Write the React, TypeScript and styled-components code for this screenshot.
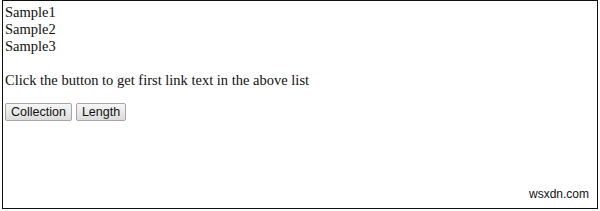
import React from 'react'
import styled, { createGlobalStyle } from 'styled-components'

const GlobalStyle = createGlobalStyle`
  html, body {
    margin: 0;
    padding: 0;
    background: #fff;
  }
`

const Page = styled.div`
  width: 600px;
  height: 211px;
  padding: 0 2px 2px 2px;
  box-sizing: border-box;
`

const Frame = styled.div`
  position: relative;
  height: 100%;
  border: 1px solid #111;
  box-sizing: border-box;
  padding: 3px 2px;
  font-family: 'Liberation Serif', 'Times New Roman', serif;
  font-size: 14.5px;
  line-height: 17px;
  color: #111;
`

const LinkList = styled.div`
  display: flex;
  flex-direction: column;
`

const Item = styled.div``

const Note = styled.p`
  margin: 17px 0 14px;
`

const ButtonRow = styled.div`
  display: flex;
  gap: 4px;
`

const Button = styled.button`
  height: 18px;
  padding: 0 5px;
  font-family: 'Liberation Sans', Arial, sans-serif;
  font-size: 12.5px;
  color: #111;
  background: linear-gradient(#f6f6f6, #dcdcdc);
  border: 1px solid #a6a6a6;
  border-radius: 2px;
  line-height: 16px;
`

const Watermark = styled.span`
  position: absolute;
  right: 8px;
  bottom: 7px;
  font-family: 'Liberation Sans', Arial, sans-serif;
  font-size: 12px;
  line-height: 14px;
  color: #111;
`

const App = () => {
  return (
    <Page>
      <GlobalStyle />
      <Frame>
        <LinkList>
          {['Sample1', 'Sample2', 'Sample3'].map((s) => (
            <Item key={s}>{s}</Item>
          ))}
        </LinkList>
        <Note>Click the button to get first link text in the above list</Note>
        <ButtonRow>
          <Button type="button">Collection</Button>
          <Button type="button">Length</Button>
        </ButtonRow>
        <Watermark>wsxdn.com</Watermark>
      </Frame>
    </Page>
  )
}

export default App
